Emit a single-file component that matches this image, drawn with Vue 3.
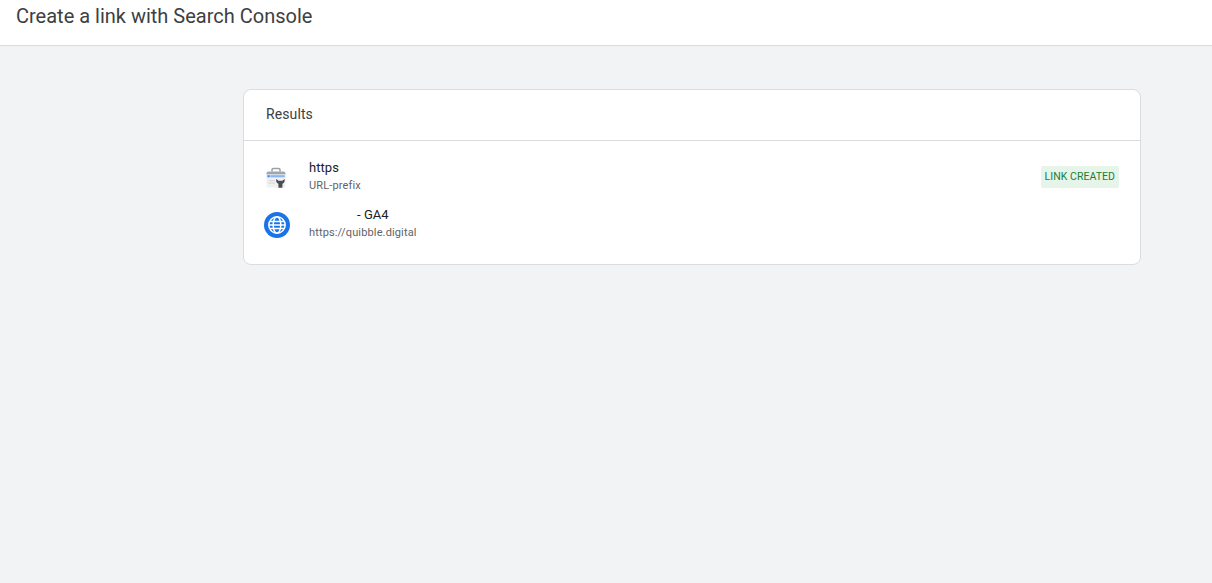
<script setup>
const rows = [
  { id: 'sc', title: 'https', sub: 'URL-prefix', badge: 'LINK CREATED' },
  { id: 'web', title: '- GA4', sub: 'https://quibble.digital', indent: true }
]
</script>

<template>
  <div class="page">
    <header class="top"><h1>Create a link with Search Console</h1></header>
    <main class="main">
      <section class="card">
        <div class="card-head">Results</div>
        <div class="card-body">
          <div v-for="r in rows" :key="r.id" class="row">
            <div class="icon">
              <svg v-if="r.id === 'sc'" width="24" height="24" viewBox="0 0 24 24">
                <path d="M8 5.500V3.800c0-.8.500-1.300 1.300-1.300h5.400c.8 0 1.300.5 1.300 1.300v1.700" fill="none" stroke="#9aa0a6" stroke-width="1.500"/>
                <path d="M2.500 7.500c0-1.100.9-2 2-2h15c1.100 0 2 .9 2 2v1h-19z" fill="#a2a6ab"/>
                <rect x="2.500" y="8.500" width="19" height="3.500" fill="#d2e3fc"/>
                <rect x="3.500" y="9.200" width="2.200" height="1.900" fill="#4285f4"/>
                <rect x="6.500" y="9.200" width="14" height="1.900" fill="#8ab4f8"/>
                <path d="M2.500 12h19v8c0 .8-.6 1.500-1.500 1.500H4c-.9 0-1.500-.7-1.500-1.500z" fill="#f1f1f1"/>
                <rect x="4.500" y="14" width="6.500" height="1.300" fill="#dcdcdc"/>
                <rect x="4.500" y="16.500" width="6.500" height="1.300" fill="#dcdcdc"/>
                <path d="M12.400 13c-.9 2 0 4 2 4.700v4h4v-4c2-.7 2.900-2.700 2-4.700l-2 1.800h-4z" fill="#4a4c50"/>
              </svg>
              <svg v-else width="26" height="26" viewBox="0 0 26 26">
                <circle cx="13" cy="13" r="13" fill="#1a73e8"/>
                <g fill="none" stroke="#fff" stroke-width="1.500">
                  <circle cx="13" cy="13" r="8.200"/>
                  <ellipse cx="13" cy="13" rx="3.800" ry="8.200"/>
                  <path d="M5 13h16M6 9.500h14M6 16.500h14"/>
                </g>
              </svg>
            </div>
            <div class="text">
              <div class="title" :class="{ indent: r.indent }">{{ r.title }}</div>
              <div class="sub">{{ r.sub }}</div>
            </div>
            <span v-if="r.badge" class="badge">{{ r.badge }}</span>
          </div>
        </div>
      </section>
    </main>
  </div>
</template>

<style scoped>
.page {
  height: 583px;
  overflow: hidden;
  background: #f1f3f4;
  font-family: Roboto, "Liberation Sans", sans-serif;
  color: #202124;
}
.top {
  height: 45px;
  background: #fff;
  border-bottom: 1px solid #dadce0;
  padding-left: 16px;
}
.top h1 {
  margin: 0;
  font-size: 20px;
  font-weight: 400;
  line-height: 33px;
  color: #3c4043;
}
.main {
  padding: 43px 71px 0 243px;
}
.card {
  background: #fff;
  border: 1px solid #dadce0;
  border-radius: 8px;
}
.card-head {
  height: 50px;
  line-height: 48px;
  padding-left: 22px;
  font-size: 14px;
  letter-spacing: 0.1px;
  color: #3c4043;
  border-bottom: 1px solid #dadce0;
}
.card-body {
  padding: 12px 21px 17px 20px;
}
.row {
  display: flex;
  align-items: center;
  height: 47px;
}
.icon {
  width: 45px;
  display: flex;
  justify-content: flex-start;
  position: relative;
  top: 1px;
}
.text { flex: 1; }
.title {
  font-size: 13px;
  font-weight: 400;
  letter-spacing: 0.05px;
  line-height: 18px;
}
.title.indent { padding-left: 48px; }
.sub {
  font-size: 11px;
  letter-spacing: 0.14px;
  line-height: 17px;
  color: #5f6368;
}
.badge {
  background: #e6f4ea;
  color: #188038;
  font-size: 10.500px;
  letter-spacing: 0.05px;
  line-height: 22px;
  padding: 0 4px;
  border-radius: 2px;
}
</style>
